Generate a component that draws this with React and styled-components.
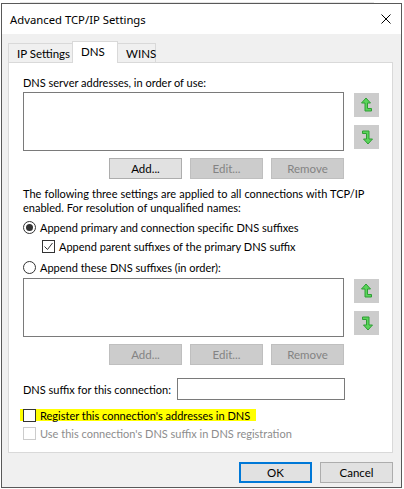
import React from 'react'
import styled, { createGlobalStyle, css } from 'styled-components'

const GlobalStyle = createGlobalStyle`
  body {
    margin: 0;
    background: #ffffff;
    font-family: Lato, 'Noto Sans', sans-serif;
    font-size: 11px;
    color: #000;
  }
`

const ARROW = 'M5 1 L9.5 6 L6.5 6 L6.5 11.5 L10.5 11.5 L10.5 14 L4 14 L4 6 L0.5 6 Z'

const UpArrow = () => (
  <svg width="12" height="16" viewBox="0 0 12 16">
    <path d={ARROW} fill="#5bd45b" stroke="#2f9e35" strokeWidth="1" />
  </svg>
)

const DownArrow = () => (
  <svg width="12" height="16" viewBox="0 0 12 16" style={{ transform: 'rotate(180deg)' }}>
    <path d={ARROW} fill="#5bd45b" stroke="#2f9e35" strokeWidth="1" />
  </svg>
)

function ListSection({ disabledAdd, gap }) {
  return (
    <>
      <ListRow gap={gap}>
        <ListBox />
        <ArrowColumn>
          <ArrowButton><UpArrow /></ArrowButton>
          <ArrowButton><DownArrow /></ArrowButton>
        </ArrowColumn>
      </ListRow>
      <ButtonRow>
        <Button disabled={disabledAdd}>Add...</Button>
        <Button disabled>Edit...</Button>
        <Button disabled>Remove</Button>
      </ButtonRow>
    </>
  )
}

export default function App() {
  return (
    <>
      <GlobalStyle />
      <Screen>
        <BehindStrip />
        <Window>
          <TitleBar>
            <Title>Advanced TCP/IP Settings</Title>
            <CloseIcon viewBox="0 0 10 10">
              <path d="M0.5 0.5 L9.5 9.5 M9.5 0.5 L0.5 9.5" stroke="#000" strokeWidth="1" />
            </CloseIcon>
          </TitleBar>
          <Body>
            <TabRow>
              <Tab width={65}>IP Settings</Tab>
              <Tab width={46} active>DNS</Tab>
              <Tab width={39}>WINS</Tab>
            </TabRow>
            <Panel>
              <Label>DNS server addresses, in order of use:</Label>
              <ListSection gap={2} />
              <Paragraph>
                The following three settings are applied to all connections with TCP/IP
                <br />
                enabled. For resolution of unqualified names:
              </Paragraph>
              <OptionRow>
                <Radio checked />
                <span>Append primary and connection specific DNS suffixes</span>
              </OptionRow>
              <OptionRow indent>
                <CheckBox>
                  <svg width="11" height="11" viewBox="0 0 11 11">
                    <path d="M1.5 5.5 L4.5 8.5 L9.5 2" fill="none" stroke="#333" strokeWidth="1" />
                  </svg>
                </CheckBox>
                <span>Append parent suffixes of the primary DNS suffix</span>
              </OptionRow>
              <OptionRow spaced>
                <Radio />
                <span>Append these DNS suffixes (in order):</span>
              </OptionRow>
              <ListSection disabledAdd gap={4} />
              <SuffixRow>
                <span>DNS suffix for this connection:</span>
                <TextInput />
              </SuffixRow>
              <OptionRow highlight>
                <CheckBox />
                <span>Register this connection's addresses in DNS</span>
              </OptionRow>
              <OptionRow disabled>
                <CheckBox disabled />
                <span>Use this connection's DNS suffix in DNS registration</span>
              </OptionRow>
            </Panel>
            <Footer>
              <Button primary>OK</Button>
              <Button>Cancel</Button>
            </Footer>
          </Body>
        </Window>
      </Screen>
    </>
  )
}

const Screen = styled.div`
  width: 404px;
  height: 489px;
  overflow: hidden;
  background: #ffffff;
`

const BehindStrip = styled.div`
  height: 3px;
  margin: 0 30px 0 20px;
  border-bottom: 1px solid #e4e4e4;
  box-sizing: border-box;
`

const Window = styled.div`
  box-sizing: border-box;
  margin-left: 1px;
  width: 401px;
  height: 485px;
  border: 1px solid #595959;
  display: flex;
  flex-direction: column;
`

const TitleBar = styled.div`
  height: 30px;
  background: #ffffff;
  display: flex;
  align-items: center;
  justify-content: space-between;
  padding: 0 10px 0 8px;
`

const Title = styled.span`
  font-family: 'Noto Sans', sans-serif;
  font-size: 11.3px;
  margin-top: 1px;
`

const CloseIcon = styled.svg`
  width: 10px;
  height: 10px;
`

const Body = styled.div`
  flex: 1;
  background: #f0f0f0;
  padding: 7px 8px 0 6px;
  display: flex;
  flex-direction: column;
`

const TabRow = styled.div`
  display: flex;
  align-items: flex-end;
  height: 21px;
  position: relative;
  z-index: 1;
`

const Tab = styled.div`
  box-sizing: border-box;
  width: ${(p) => p.width}px;
  height: 19px;
  padding-left: 8px;
  border: 1px solid #d9d9d9;
  border-bottom: none;
  background: #f0f0f0;
  display: flex;
  align-items: center;
  margin-right: -1px;
  white-space: nowrap;
  font-size: 11.5px;
  ${(p) =>
    p.active &&
    css`
      height: 22px;
      margin-bottom: -1px;
      background: #ffffff;
      padding-bottom: 3px;
      position: relative;
      z-index: 2;
    `}
`

const Panel = styled.div`
  box-sizing: border-box;
  height: 391px;
  background: #ffffff;
  border: 1px solid #d9d9d9;
  padding: 12px 0 0 14px;
  display: flex;
  flex-direction: column;
`

const Label = styled.div`
  line-height: 15px;
  height: 15px;
`

const ListRow = styled.div`
  display: flex;
  gap: 10px;
  margin-top: ${(p) => p.gap}px;
`

const ListBox = styled.div`
  box-sizing: border-box;
  width: 321px;
  height: 59px;
  border: 1px solid #7a7a7a;
  background: #ffffff;
`

const ArrowColumn = styled.div`
  display: flex;
  flex-direction: column;
  gap: 8px;
  padding-top: 1px;
`

const ArrowButton = styled.div`
  width: 25px;
  height: 24px;
  background: #cccccc;
  display: flex;
  align-items: center;
  justify-content: center;
`

const ButtonRow = styled.div`
  display: flex;
  gap: 8px;
  width: 321px;
  justify-content: flex-end;
  margin-top: 7px;
`

const Button = styled.div`
  box-sizing: border-box;
  width: 73px;
  height: 21px;
  border: 1px solid #adadad;
  background: #e1e1e1;
  display: flex;
  align-items: center;
  justify-content: center;
  color: #000;
  font-size: 11.5px;
  ${(p) =>
    p.disabled &&
    css`
      background: #cccccc;
      border-color: #bfbfbf;
      color: #838383;
    `}
  ${(p) =>
    p.primary &&
    css`
      border: 2px solid #0078d7;
    `}
`

const Paragraph = styled.div`
  margin-top: 8px;
  line-height: 14px;
  white-space: nowrap;
  word-spacing: 0.3px;
`

const OptionRow = styled.div`
  display: flex;
  align-items: center;
  gap: 4px;
  height: 13px;
  margin-top: 6px;
  align-self: flex-start;
  white-space: nowrap;
  ${(p) =>
    p.indent &&
    css`
      margin-left: 19px;
      margin-top: 6px;
    `}
  ${(p) =>
    p.spaced &&
    css`
      margin-top: 8px;
    `}
  ${(p) =>
    p.highlight &&
    css`
      background: #ffff00;
      margin-left: -3px;
      margin-top: 9px;
      padding: 0 6px 0 3px;
      height: 12px;
    `}
  ${(p) =>
    p.disabled &&
    css`
      color: #8d8d8d;
      margin-top: 6px;
    `}
`

const Radio = styled.div`
  box-sizing: border-box;
  width: 13px;
  height: 13px;
  border-radius: 50%;
  border: 1px solid #333333;
  background: #ffffff;
  display: flex;
  align-items: center;
  justify-content: center;
  &::after {
    content: '';
    width: 7px;
    height: 7px;
    border-radius: 50%;
    background: ${(p) => (p.checked ? '#333333' : 'transparent')};
  }
`

const CheckBox = styled.div`
  box-sizing: border-box;
  width: 13px;
  height: 13px;
  border: 1px solid #333333;
  background: #ffffff;
  display: flex;
  align-items: center;
  justify-content: center;
  ${(p) =>
    p.disabled &&
    css`
      border-color: #cccccc;
    `}
`

const SuffixRow = styled.div`
  display: flex;
  align-items: center;
  gap: 6px;
  margin-top: 13px;
  white-space: nowrap;
`

const TextInput = styled.div`
  box-sizing: border-box;
  width: 170px;
  height: 22px;
  border: 1px solid #7a7a7a;
  background: #ffffff;
  margin-left: auto;
  margin-right: 47px;
`

const Footer = styled.div`
  display: flex;
  justify-content: flex-end;
  gap: 8px;
  margin-top: 9px;
`
